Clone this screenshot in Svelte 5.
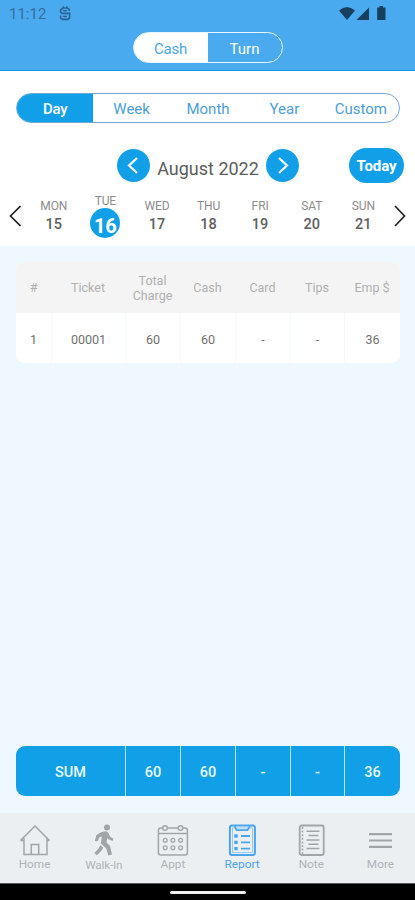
<script>
  const periods = ['Day', 'Week', 'Month', 'Year', 'Custom'];
  const days = [
    ['MON', 15], ['TUE', 16], ['WED', 17], ['THU', 18], ['FRI', 19], ['SAT', 20], ['SUN', 21]
  ];
  const headings = ['#', 'Ticket', 'Total Charge', 'Cash', 'Card', 'Tips', 'Emp $'];
  const row = ['1', '00001', '60', '60', '-', '-', '36'];
  const sums = ['SUM', '60', '60', '-', '-', '36'];
  const nav = ['Home', 'Walk-In', 'Appt', 'Report', 'Note', 'More'];
</script>

<div class="screen">
  <header>
    <div class="status">
      <span class="time">11:12</span>
      <svg class="app" width="13" height="16" viewBox="0 0 13 16" fill="none" stroke="#2b6292" stroke-width="1.6"><path d="M10.3 5V3.4L8.2 2H4L1.6 3.8V6.2L3 7.4H10.6V12L8.7 13.4H3.7L1.6 12V9.5M4.2 4.7H7.7M4.2 10.5H7.7M4.2 0.3V2M7.8 0.3V2"/></svg>
      <svg class="sys" width="48" height="16" viewBox="0 0 48 16" fill="#183f5e"><path d="M0 4.5Q8 -2.5 16 4.5L8 14Z"/><path d="M17.5 14L30 1.5V14Z"/><path d="M40.5 0H44V1.5H46.5V14H38.2V1.5H40.5Z"/></svg>
    </div>
    <div class="switch"><span class="on">Cash</span><span>Turn</span></div>
  </header>

  <section class="filters">
    <div class="periods">
      {#each periods as p, i}<span class:on={i === 0}>{p}</span>{/each}
    </div>
    <div class="month">
      <button class="round" aria-label="Previous month"><svg width="33" height="33" viewBox="0 0 33 33"><path d="M20 9L12 16.5L20 24"/></svg></button>
      <span class="title">August 2022</span>
      <button class="round" aria-label="Next month"><svg width="33" height="33" viewBox="0 0 33 33"><path d="M13 9L21 16.5L13 24"/></svg></button>
      <button class="today">Today</button>
    </div>
    <div class="week">
      <svg class="arrow" width="12" height="22" viewBox="0 0 12 22"><path d="M11.5 1L1.5 11L11.5 21"/></svg>
      <div class="days">
        {#each days as [name, num]}
          <div class="day" class:sel={num === 16}><span class="name">{name}</span><span class="num">{num}</span></div>
        {/each}
      </div>
      <svg class="arrow" width="12" height="22" viewBox="0 0 12 22"><path d="M1 1L10.5 11L1 21"/></svg>
    </div>
  </section>

  <main>
    <div class="table">
      <div class="cells head">{#each headings as h}<span>{h}</span>{/each}</div>
      <div class="cells body">{#each row as c}<span>{c}</span>{/each}</div>
    </div>
    <div class="sum">{#each sums as s}<span>{s}</span>{/each}</div>
  </main>

  <nav>
    {#each nav as item}
      <div class="item" class:active={item === 'Report'}>
        <svg width="32" height="32" viewBox="0 0 32 32" fill="none" stroke="currentColor" stroke-width="1.5">
          {#if item === 'Home'}
            <path d="M1.5 16.5L16 2L30.5 16.5M5 14V30.5H28V14M12.3 30.5V20.5H19.7V30.5M1.5 16.5H5M28 16.5H30.5"/>
          {:else if item === 'Walk-In'}
            <g fill="currentColor" stroke="none"><circle cx="19" cy="3.5" r="3"/><path d="M12.5 8.5L17 7.3Q20 7.3 20.8 10L22.5 13L25.5 14.8L24.5 17L20.5 15.3L19.4 14L18.4 18.3L22 22L24 30.5L20.3 31.5L18.3 24.5L12.8 19.5L13.8 12.4L11.2 13.4L9.8 17.3L6.8 17L8.4 11Z"/><path d="M12.3 21L15.2 23.7L13.2 27L8.9 31.3L6.2 28.9L10.5 24.7Z"/></g>
          {:else if item === 'Appt'}
            <rect x="1.4" y="4" width="29" height="27" rx="2.5"/><path d="M1.4 9.5H30.4"/>
            <g fill="#eceff2"><circle cx="8" cy="4" r="2.3"/><circle cx="23.5" cy="4" r="2.3"/></g>
            <g stroke-width="1.3">{#each [8.2, 15.9, 23.6] as x}<circle cx={x} cy="16.2" r="1.9"/><circle cx={x} cy="23.8" r="1.9"/>{/each}</g>
          {:else if item === 'Report'}
            <rect x="3.9" y="1.5" width="25" height="29.5" rx="2" stroke-width="2"/><rect x="6.4" y="4" width="20" height="24.7" stroke-width=".5"/><path d="M8.5 2L10.5 6.2H21.5L24 2" stroke-width="1.7"/>
            <path d="M8.3 12H11.7M8.3 18.3H11.7M8.3 24.6H11.7" stroke-width="3.3"/><path d="M15 12H24M15 18.3H24M15 24.6H24" stroke-width="1.8"/>
          {:else if item === 'Note'}
            <rect x="4.7" y="1.5" width="24" height="29.5" rx="2" stroke-width="1.8"/><path d="M7.5 3V30" stroke-dasharray="2 1.6"/><path d="M11.5 7.3H24.5M13.5 11.6H23.5M11.5 15.9H24.5M13.5 20.2H23.5M11.5 24.5H24.5"/>
          {:else}
            <path d="M5 10.2H28M5 16.5H28M5 22.8H28" stroke-width="2.2"/>
          {/if}
        </svg>
        <span>{item}</span>
      </div>
    {/each}
  </nav>
  <footer><i></i></footer>
</div>

<style>
  :global(body) { margin: 0; }
  * { box-sizing: border-box; }
  .screen { width: 415px; height: 900px; display: flex; flex-direction: column; background: #f0f8ff; font-family: Roboto, "Liberation Sans", sans-serif; overflow: hidden; }
  header { height: 71px; background: #4aaaf0; border-bottom: 1px solid #1698e4; display: flex; flex-direction: column; align-items: center; }
  .status { width: 100%; height: 32px; padding: 6px 28px 0 9px; display: flex; align-items: flex-start; }
  .time { font-size: 15px; line-height: 17px; color: #376e9e; }
  .app { margin-left: 13px; }
  .sys { margin-left: auto; }
  .switch { width: 150px; height: 31px; border: 1px solid #e9f6ff; border-radius: 16px; display: flex; overflow: hidden; font-size: 15px; color: #fff; }
  .switch span { flex: 1; display: flex; align-items: center; justify-content: center; padding-top: 2px; }
  .switch .on { background: #fff; color: #4ba6e4; letter-spacing: -.2px; }
  .filters { height: 175px; background: #fff; padding-top: 22px; }
  .periods { margin: 0 15px 0 16px; height: 30px; display: flex; border: 1px solid #70a9d9; border-radius: 15px; overflow: hidden; color: #4b9edb; font-size: 15px; }
  .periods span { flex: 1 1 0; min-width: 0; display: flex; align-items: center; justify-content: center; padding-top: 2px; }
  .periods .on { background: #11a0e8; color: #fff; font-weight: 500; letter-spacing: -.2px; }
  .month { display: flex; height: 35px; margin-top: 25px; padding: 0 11px 0 117px; align-items: center; }
  button { border: 0; padding: 0; font-family: inherit; color: #fff; background: #11a0e8; }
  .round { width: 33px; height: 33px; border-radius: 50%; display: flex; }
  .round path { stroke: #fff; stroke-width: 2.2; fill: none; }
  .title { width: 116px; text-align: center; font-size: 18px; color: #5c5c5c; padding-top: 5px; white-space: nowrap; }
  .today { margin-left: auto; width: 55px; height: 35px; border-radius: 18px; font-weight: 700; font-size: 15px; letter-spacing: -.1px; }
  .week { display: flex; height: 48px; margin-top: 12px; padding: 0 9px; }
  .arrow { margin-top: 10px; flex: none; }
  .arrow path { fill: none; stroke: #222; stroke-width: 1.7; }
  .days { display: flex; flex: 1; margin: 0 5px 0 7px; }
  .day { flex: 1; display: flex; flex-direction: column; align-items: center; }
  .name { font-size: 12px; line-height: 14px; margin-top: 4px; color: #8c8c8c; letter-spacing: -.1px; }
  .num { font-size: 14.5px; line-height: 18px; margin-top: 3px; color: #606060; font-weight: 500; }
  .sel .name { margin-top: 0; line-height: 13px; }
  .sel .num { width: 30px; height: 30px; line-height: 37px; margin-top: 0; border-radius: 50%; background: #11a0e8; color: #fff; font-size: 20px; font-weight: 700; text-align: center; }
  main { height: 567px; padding: 16px 15px 17px 16px; display: flex; flex-direction: column; justify-content: space-between; }
  .table { height: 101px; border-radius: 9px; overflow: hidden; background: #fff; }
  .cells { display: grid; grid-template-columns: 35px 74px 55px 55px 55px 54px 56px; }
  .cells span, .sum span { display: flex; align-items: center; justify-content: center; text-align: center; }
  .head { height: 51px; background: #f4f4f4; color: #b0b0b0; font-size: 12.5px; line-height: 15px; }
  .body { height: 50px; color: #707070; font-size: 12.5px; }
  .body span { padding-top: 2px; }
  .body span + span { border-left: 1px solid #f3f9fc; }
  .sum { height: 50px; display: grid; grid-template-columns: 109px 55px 55px 55px 54px 56px; border-radius: 9px; overflow: hidden; background: #11a0e8; color: #e8faff; font-size: 14.5px; font-weight: 500; }
  .sum span { padding-top: 3px; }
  .sum span + span { border-left: 1.5px solid #b9e6ff; }
  nav { height: 70px; background: #eceff2; display: flex; padding-top: 11px; }
  .item { flex: 1; display: flex; flex-direction: column; align-items: center; color: #a2a5a7; font-size: 11.8px; }
  .item span { line-height: 14px; margin-top: 1px; color: #b0b3b6; }
  .item:nth-child(2) span { letter-spacing: -.2px; margin-top: 2px; }
  .item.active, .item.active span { color: #4ba5ee; }
  footer { height: 17px; background: #000; border-top: 1px solid #555; display: flex; justify-content: center; padding-top: 7px; }
  i { width: 76px; height: 3px; border-radius: 2px; background: #eee; }
</style>
